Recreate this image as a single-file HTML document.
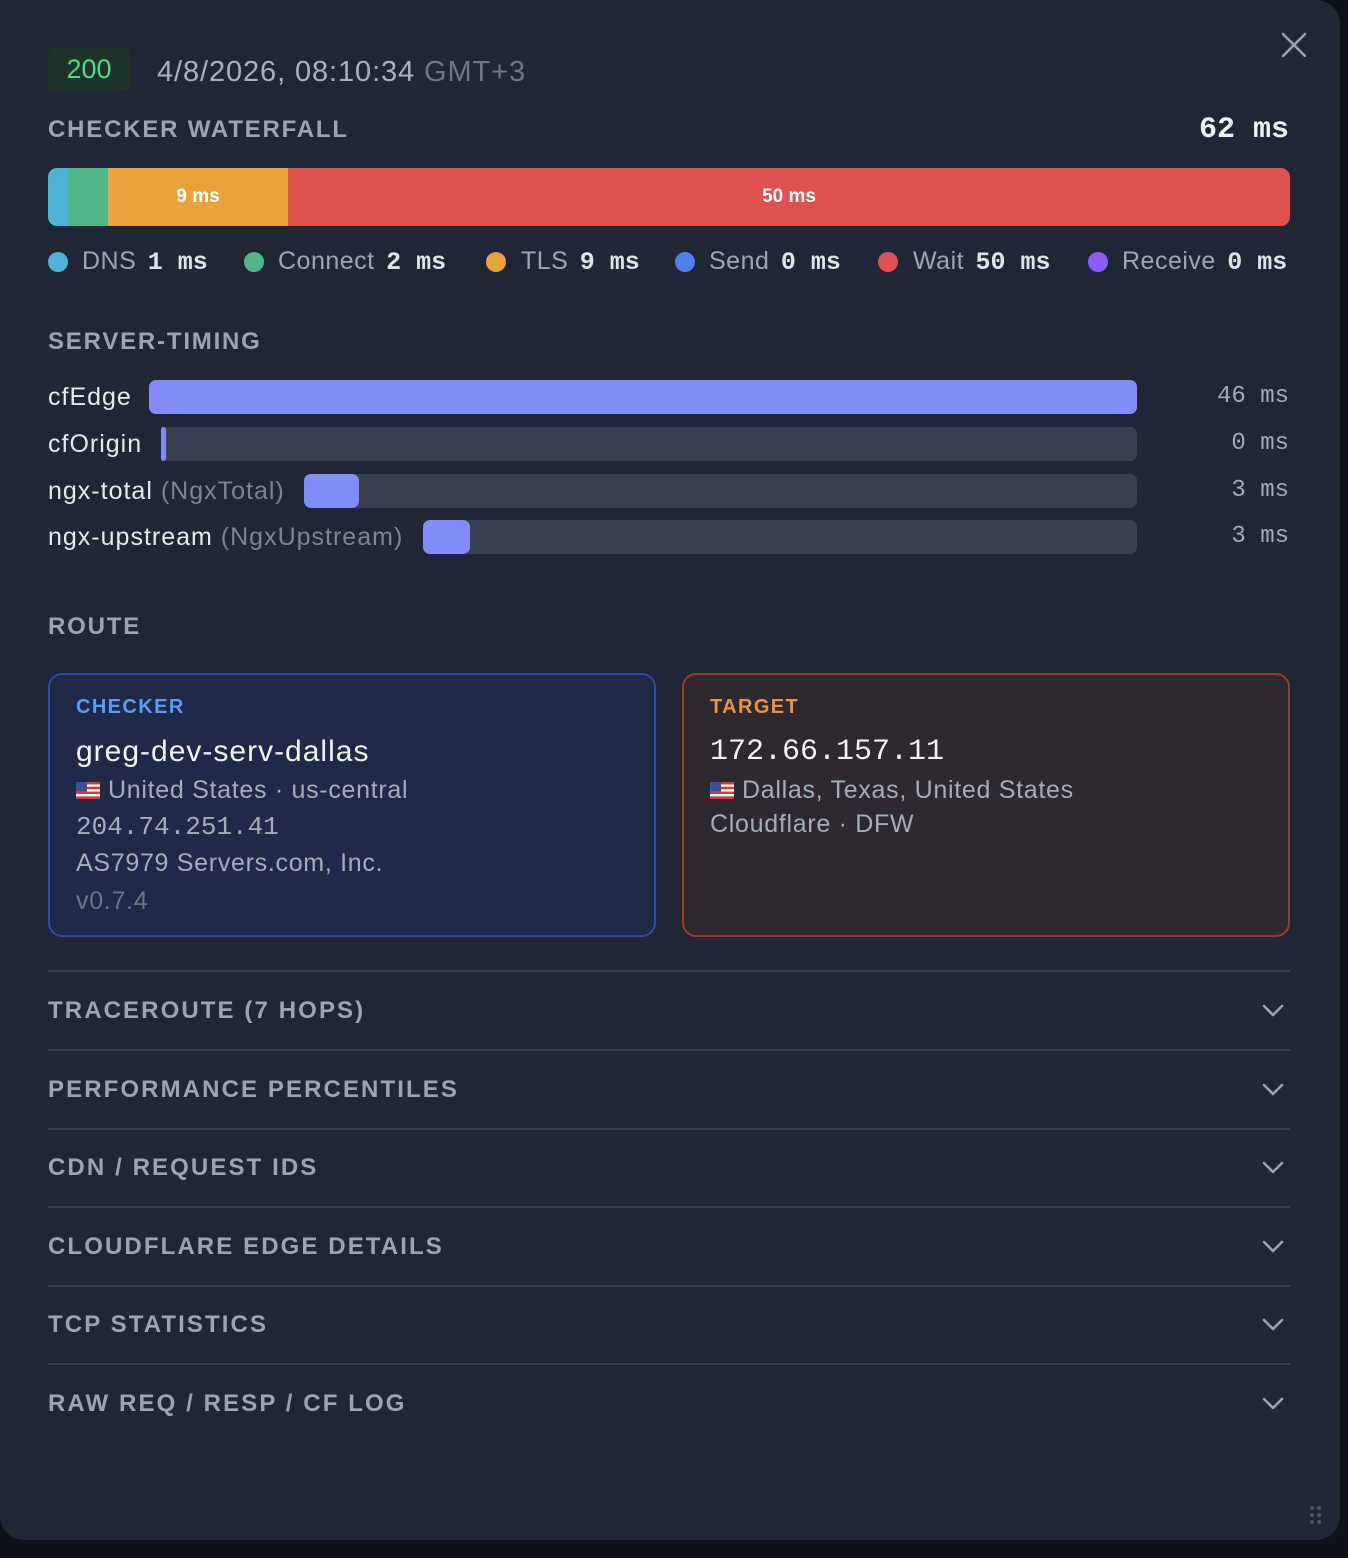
<!DOCTYPE html>
<html><head><meta charset="utf-8">
<style>
*{margin:0;padding:0;box-sizing:border-box}
html,body{width:1348px;height:1558px;background:#0d1119;overflow:hidden}
body{font-family:"Liberation Sans",sans-serif;position:relative}
.panel{position:absolute;left:0;top:0;width:1340px;height:1540px;background:#1f2736;border-radius:0 24px 24px 24px}
.a{position:absolute;white-space:nowrap}
.mono{font-family:"Liberation Mono",monospace}
.sec{font-size:24px;font-weight:bold;letter-spacing:1.8px;color:#9aa5b4}
.dot{position:absolute;width:20px;height:20px;border-radius:50%}
.lg{font-size:25px;color:#9ca6b4;line-height:30px;letter-spacing:0.5px}
.lg b{font-family:"Liberation Mono",monospace;color:#dfe4ea;font-weight:bold;font-size:25px;letter-spacing:0;margin-left:4px}
.lbl{font-size:25px;color:#e6e9ee;line-height:30px;letter-spacing:1px}
.lbl span{color:#7b8596}
.track{position:absolute;height:34px;background:#374151;border-radius:7px;right:211px}
.fill{position:absolute;height:34px;background:#818cf8;border-radius:7px}
.val{font-family:"Liberation Mono",monospace;font-size:24px;color:#a2acb9;right:59px;line-height:30px}
.card{position:absolute;top:673px;height:264px;width:608px;border-radius:14px;border:2px solid}
.ct{font-size:25px;color:#a4adba;line-height:30px;letter-spacing:0.7px}
.line{position:absolute;left:48px;width:1242px;height:2px;background:#334052}
.acc{left:48px;font-size:24px;font-weight:bold;letter-spacing:2.1px;color:#9aa5b4;line-height:30px}
.chev{position:absolute;left:1262px;width:22px;height:14px}
.flag{display:inline-block;width:24px;height:17px;vertical-align:-1px;margin-right:8px}
</style></head><body>
<div class="panel"></div>

<div class="a" style="left:48px;top:48px;width:82px;height:43px;background:#1c3329;border-radius:6px;color:#4ade80;font-size:27px;line-height:43px;text-align:center">200</div>
<div class="a" style="left:157px;top:55px;font-size:29px;color:#a8b1be;line-height:34px;letter-spacing:0.9px">4/8/2026, 08:10:34 <span style="color:#6c7687">GMT+3</span></div>
<svg class="a" style="left:1280px;top:31px" width="28" height="28" viewBox="0 0 28 28"><path d="M3 3L25 25M25 3L3 25" stroke="#9aa3af" stroke-width="2.6" stroke-linecap="round"/></svg>

<div class="a sec" style="left:48px;top:115px;line-height:30px">CHECKER WATERFALL</div>
<div class="a mono" style="right:59px;top:114px;font-size:30px;font-weight:bold;color:#eef1f5;line-height:32px">62 ms</div>

<div class="a" style="left:48px;top:168px;width:1242px;height:58px;border-radius:9px;overflow:hidden;display:flex">
<div style="width:20px;background:#4fb3d9"></div>
<div style="width:40px;background:#52b788"></div>
<div style="width:180px;background:#e9a23b;color:#fff;font-weight:bold;font-size:19px;line-height:58px;text-align:center">9 ms</div>
<div style="flex:1;background:#e0524f;color:#fff;font-weight:bold;font-size:19px;line-height:58px;text-align:center">50 ms</div>
</div>

<div class="dot" style="left:48px;top:252px;background:#4fb3d9"></div>
<div class="a lg" style="left:82px;top:246px">DNS <b>1 ms</b></div>
<div class="dot" style="left:244px;top:252px;background:#52b788"></div>
<div class="a lg" style="left:278px;top:246px">Connect <b>2 ms</b></div>
<div class="dot" style="left:486px;top:252px;background:#e9a23b"></div>
<div class="a lg" style="left:521px;top:246px">TLS <b>9 ms</b></div>
<div class="dot" style="left:675px;top:252px;background:#4f80f0"></div>
<div class="a lg" style="left:709px;top:246px">Send <b>0 ms</b></div>
<div class="dot" style="left:878px;top:252px;background:#e0524f"></div>
<div class="a lg" style="left:913px;top:246px">Wait <b>50 ms</b></div>
<div class="dot" style="left:1088px;top:252px;background:#8b5cf6"></div>
<div class="a lg" style="left:1122px;top:246px">Receive <b>0 ms</b></div>

<div class="a sec" style="left:48px;top:327px;line-height:30px">SERVER-TIMING</div>

<div class="a lbl" style="left:48px;top:382px">cfEdge</div>
<div class="track" style="left:149px;top:380px"></div><div class="fill" style="left:149px;top:380px;width:988px"></div>
<div class="a val" style="top:382px">46 ms</div>

<div class="a lbl" style="left:48px;top:429px">cfOrigin</div>
<div class="track" style="left:161px;top:427px"></div><div class="fill" style="left:161px;top:427px;width:5px;border-radius:3px"></div>
<div class="a val" style="top:429px">0 ms</div>

<div class="a lbl" style="left:48px;top:476px">ngx-total <span>(NgxTotal)</span></div>
<div class="track" style="left:304px;top:474px"></div><div class="fill" style="left:304px;top:474px;width:55px"></div>
<div class="a val" style="top:476px">3 ms</div>

<div class="a lbl" style="left:48px;top:522px">ngx-upstream <span>(NgxUpstream)</span></div>
<div class="track" style="left:423px;top:520px"></div><div class="fill" style="left:423px;top:520px;width:47px"></div>
<div class="a val" style="top:522px">3 ms</div>

<div class="a sec" style="left:48px;top:612px;line-height:30px">ROUTE</div>

<div class="card" style="left:48px;background:#1f2a48;border-color:#2d4cb0"></div>
<div class="a" style="left:76px;top:695px;font-size:20px;font-weight:bold;letter-spacing:1.4px;color:#5b9cf6;line-height:24px">CHECKER</div>
<div class="a" style="left:76px;top:735px;font-size:30px;color:#f1f3f6;line-height:34px;letter-spacing:1px">greg-dev-serv-dallas</div>
<div class="a ct" style="left:76px;top:775px"><svg class="flag" viewBox="0 0 24 17"><rect width="24" height="17" fill="#f3f3f3"/><g fill="#d23a3a"><rect y="0" width="24" height="2.4"/><rect y="4.8" width="24" height="2.4"/><rect y="9.6" width="24" height="2.4"/><rect y="14.4" width="24" height="2.6"/></g><rect width="11" height="9.6" fill="#3b4f9a"/></svg>United States · us-central</div>
<div class="a mono" style="left:76px;top:812px;font-size:26px;color:#a4adba;line-height:30px">204.74.251.41</div>
<div class="a ct" style="left:76px;top:848px">AS7979 Servers.com, Inc.</div>
<div class="a ct" style="left:76px;top:886px;color:#6c7687">v0.7.4</div>

<div class="card" style="left:682px;background:#2e2930;border-color:#9a3e21"></div>
<div class="a" style="left:710px;top:695px;font-size:20px;font-weight:bold;letter-spacing:1.4px;color:#f0913b;line-height:24px">TARGET</div>
<div class="a mono" style="left:710px;top:735px;font-size:30px;color:#f1f3f6;line-height:34px">172.66.157.11</div>
<div class="a ct" style="left:710px;top:775px"><svg class="flag" viewBox="0 0 24 17"><rect width="24" height="17" fill="#f3f3f3"/><g fill="#d23a3a"><rect y="0" width="24" height="2.4"/><rect y="4.8" width="24" height="2.4"/><rect y="9.6" width="24" height="2.4"/><rect y="14.4" width="24" height="2.6"/></g><rect width="11" height="9.6" fill="#3b4f9a"/></svg>Dallas, Texas, United States</div>
<div class="a ct" style="left:710px;top:809px">Cloudflare · DFW</div>

<div class="line" style="top:970px"></div>
<div class="a acc" style="top:996px">TRACEROUTE (7 HOPS)</div>
<svg class="chev" style="top:1004px" viewBox="0 0 22 14"><path d="M2 2L11 11L20 2" fill="none" stroke="#9aa3af" stroke-width="2.6" stroke-linecap="round" stroke-linejoin="round"/></svg>
<div class="line" style="top:1049px"></div>
<div class="a acc" style="top:1075px">PERFORMANCE PERCENTILES</div>
<svg class="chev" style="top:1083px" viewBox="0 0 22 14"><path d="M2 2L11 11L20 2" fill="none" stroke="#9aa3af" stroke-width="2.6" stroke-linecap="round" stroke-linejoin="round"/></svg>
<div class="line" style="top:1128px"></div>
<div class="a acc" style="top:1153px">CDN / REQUEST IDS</div>
<svg class="chev" style="top:1161px" viewBox="0 0 22 14"><path d="M2 2L11 11L20 2" fill="none" stroke="#9aa3af" stroke-width="2.6" stroke-linecap="round" stroke-linejoin="round"/></svg>
<div class="line" style="top:1206px"></div>
<div class="a acc" style="top:1232px">CLOUDFLARE EDGE DETAILS</div>
<svg class="chev" style="top:1240px" viewBox="0 0 22 14"><path d="M2 2L11 11L20 2" fill="none" stroke="#9aa3af" stroke-width="2.6" stroke-linecap="round" stroke-linejoin="round"/></svg>
<div class="line" style="top:1285px"></div>
<div class="a acc" style="top:1310px">TCP STATISTICS</div>
<svg class="chev" style="top:1318px" viewBox="0 0 22 14"><path d="M2 2L11 11L20 2" fill="none" stroke="#9aa3af" stroke-width="2.6" stroke-linecap="round" stroke-linejoin="round"/></svg>
<div class="line" style="top:1363px"></div>
<div class="a acc" style="top:1389px">RAW REQ / RESP / CF LOG</div>
<svg class="chev" style="top:1397px" viewBox="0 0 22 14"><path d="M2 2L11 11L20 2" fill="none" stroke="#9aa3af" stroke-width="2.6" stroke-linecap="round" stroke-linejoin="round"/></svg>

<svg class="a" style="left:1309px;top:1505px" width="14" height="20" viewBox="0 0 14 20"><g fill="#4b5563"><circle cx="3" cy="3" r="2"/><circle cx="10" cy="3" r="2"/><circle cx="3" cy="10" r="2"/><circle cx="10" cy="10" r="2"/><circle cx="3" cy="17" r="2"/><circle cx="10" cy="17" r="2"/></g></svg>
</body></html>
